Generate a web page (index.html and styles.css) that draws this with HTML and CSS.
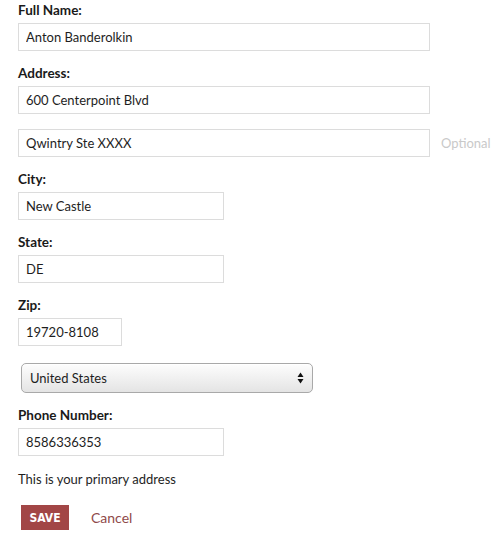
FILE: index.html
```html
<!DOCTYPE html>
<html>
<head>
	<title>Edit Address</title>
	<meta name="viewport" content="width=device-width, initial-scale=1">
	<link rel="stylesheet" href="styles.css">
</head>
<body>
	<form class="address-form">
		<div class="field">
			<label class="field-label">Full Name:</label>
			<input class="text-input wide" type="text" value="Anton Banderolkin">
		</div>
		<div class="field tight">
			<label class="field-label">Address:</label>
			<input class="text-input wide" type="text" value="600 Centerpoint Blvd">
		</div>
		<div class="field extra">
			<input class="text-input wide" type="text" value="Qwintry Ste XXXX">
			<span class="optional">Optional</span>
		</div>
		<div class="field">
			<label class="field-label">City:</label>
			<input class="text-input medium" type="text" value="New Castle">
		</div>
		<div class="field">
			<label class="field-label">State:</label>
			<input class="text-input medium" type="text" value="DE">
		</div>
		<div class="field">
			<label class="field-label">Zip:</label>
			<input class="text-input small" type="text" value="19720-8108">
		</div>
		<div class="select-wrap">
			<select class="country-select">
				<option>United States</option>
			</select>
			<svg class="select-arrows" width="7" height="12" viewBox="0 0 7 12">
				<path d="M3.5 0.5 L6.5 5 L0.5 5 Z" fill="#111"/>
				<path d="M3.5 11.5 L6.5 7 L0.5 7 Z" fill="#111"/>
			</svg>
		</div>
		<div class="field">
			<label class="field-label">Phone Number:</label>
			<input class="text-input medium" type="text" value="8586336353">
		</div>
		<p class="primary-note">This is your primary address</p>
		<div class="actions">
			<button class="save-button" type="button">SAVE</button>
			<a class="cancel-link" href="#">Cancel</a>
		</div>
	</form>
</body>
</html>
```

FILE: styles.css
```css
body {
  margin: 0;
  background: #fff;
  font-family: Lato, "Open Sans", sans-serif;
  color: #1e1e1e;
}

.address-form {
  padding: 1px 0 0 18px;
}

/* label + input blocks */
.field {
  margin-bottom: 13px;
}
.field.tight {
  margin-bottom: 15px;
}
.field.extra {
  display: flex;
  align-items: center;
}

.field-label {
  display: block;
  font-size: 13.5px;
  font-weight: bold;
  line-height: 18px;
  margin-bottom: 4px;
  color: #1a1a1a;
}

.text-input {
  box-sizing: border-box;
  height: 28px;
  border: 1px solid #dcdcdc;
  padding: 0 7px;
  font-family: Lato, "Open Sans", sans-serif;
  font-size: 13px;
  color: #1e1e1e;
  background: #fff;
  outline: none;
}
.text-input.wide {
  width: 412px;
}
.text-input.medium {
  width: 206px;
}
.text-input.small {
  width: 104px;
}

.optional {
  margin-left: 11px;
  font-size: 13px;
  color: #c9c9c9;
}

/* country dropdown */
.select-wrap {
  position: relative;
  width: 292px;
  margin: 17px 0 13px 3px;
}
.country-select {
  appearance: none;
  -webkit-appearance: none;
  box-sizing: border-box;
  width: 100%;
  height: 30px;
  border: 1px solid #a9a9a9;
  border-radius: 5px;
  padding: 0 8px;
  font-family: Lato, "Open Sans", sans-serif;
  font-size: 13px;
  color: #1e1e1e;
  background: linear-gradient(#fdfdfd, #e4e4e4);
  box-shadow: inset 0 1px 0 #fff;
}
.select-arrows {
  position: absolute;
  right: 9px;
  top: 9px;
}

.primary-note {
  margin: 14px 0 0;
  font-size: 13px;
  line-height: 18px;
}

.actions {
  display: flex;
  align-items: center;
  margin-top: 17px;
  margin-left: 3px;
}
.save-button {
  width: 48px;
  height: 25px;
  border: none;
  background: #a24646;
  color: #fff;
  font-family: "DejaVu Sans Condensed", "Liberation Sans Narrow", sans-serif;
  font-weight: bold;
  font-size: 12px;
  padding: 0;
}
.cancel-link {
  margin-left: 22px;
  font-size: 14px;
  color: #8f4a4a;
  text-decoration: none;
}
```
